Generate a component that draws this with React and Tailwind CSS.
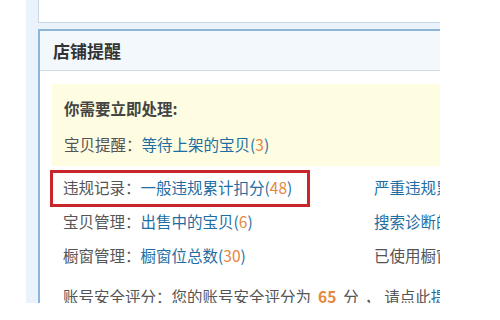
const font = { fontFamily: '"Noto Sans CJK SC", "Noto Sans", sans-serif' };

const Link = ({ children, n }) => (
  <span className="text-[#1f6ea3]">
    {children}
    {n !== undefined && (
      <>
        (<span className="text-[#e5873e]">{n}</span>)
      </>
    )}
  </span>
);

const Row = ({ label, children, right, highlight }) => (
  <div className="relative flex h-[34px] items-center">
    {highlight && (
      <div className="absolute left-[-2px] top-[-1px] h-[37px] w-[260px] border-[3px] border-[#c9262c]" />
    )}
    <div className="w-[322px] shrink-0 pl-[11px] whitespace-nowrap">
      <span className="text-[#555]">{label}：</span>
      {children}
    </div>
    <div className="whitespace-nowrap">{right}</div>
  </div>
);

export default function App() {
  return (
    <div className="w-[500px] h-[320px] bg-white overflow-hidden" style={font}>
      <div className="ml-[26px] w-[414px] h-[303px] overflow-hidden bg-[#eaf3fb] pl-[12px] text-[15.5px] leading-none">
        <div className="h-[23px] w-[420px] bg-white border-l border-b border-[#c8d8e6]" />
        <div className="mt-[6px] w-[420px] h-[300px] bg-white border-l-2 border-t-2 border-[#8db6d8]">
          <div className="h-[40px] flex items-center pl-[13px] bg-[#f3f8fd] border-b border-[#d3dce6]">
            <span className="text-[17px] font-bold text-[#333]">店铺提醒</span>
          </div>
          <div className="pl-[12px]">
            <div className="mt-[13px] h-[82px] bg-[#fefde2] pl-[12px] pt-[17px]">
              <div className="font-bold text-[#444]">你需要立即处理:</div>
              <div className="mt-[20px] text-[#555]">
                宝贝提醒：<Link n={3}>等待上架的宝贝</Link>
              </div>
            </div>
            <div className="mt-[5px]">
              <Row label="违规记录" highlight right={<Link>严重违规累计扣分</Link>}>
                <Link n={48}>一般违规累计扣分</Link>
              </Row>
              <Row label="宝贝管理" right={<Link>搜索诊断的宝贝</Link>}>
                <Link n={6}>出售中的宝贝</Link>
              </Row>
              <Row label="橱窗管理" right={<span className="text-[#555]">已使用橱窗位</span>}>
                <Link n={30}>橱窗位总数</Link>
              </Row>
              <div className="h-[48px] flex items-center pl-[11px] whitespace-nowrap text-[#555]">
                账号安全评分：您的账号安全评分为
                <span className="ml-[7px] mr-[7px] font-bold text-[#e5873e]">65</span>
                分<span className="ml-[6px] mr-[4px]">，</span>请点此<span className="text-[#1f6ea3]">提升</span>
              </div>
            </div>
          </div>
        </div>
      </div>
    </div>
  );
}
